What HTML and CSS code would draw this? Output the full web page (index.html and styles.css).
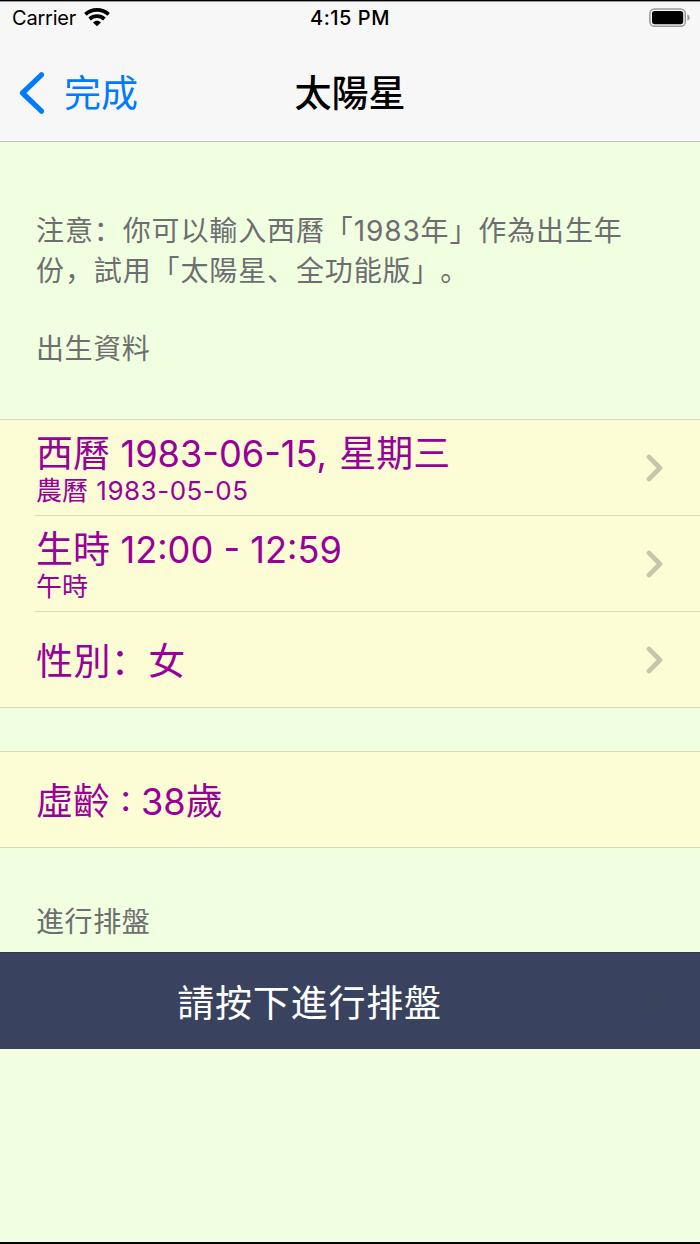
FILE: index.html
```
<!DOCTYPE html>
<html lang="zh-Hans">
<head>
  <meta charset="UTF-8" />
  <meta name="viewport" content="width=device-width, initial-scale=1.0" />
  <title>太陽星</title>
  <link rel="stylesheet" href="styles.css">
</head>
<body>
  <div class="screen">
    <header class="top">
      <div class="status">
        <div class="carrier">
          <span>Carrier</span>
          <svg class="wifi" viewBox="0 0 26 20" width="26" height="20">
            <g fill="none" stroke="#000" stroke-width="3.8">
              <path d="M1.4 7.4C8 1.4 18 1.4 24.6 7.4" />
              <path d="M5.6 12C9.9 8.2 16.1 8.2 20.4 12" />
            </g>
            <path d="M9 15.4C11.2 13.3 14.8 13.3 17 15.4L13 19.2Z" />
          </svg>
        </div>
        <span class="time">4:15 PM</span>
        <svg class="battery" viewBox="0 0 42 20" width="42" height="20">
          <rect x="0.9" y="0.9" width="35.4" height="17.4" rx="4.6" fill="none" stroke="#999" stroke-width="1.5" />
          <rect x="3" y="3" width="31.2" height="13.2" rx="2.6" />
          <path d="M38.4 6.4C41.4 7.6 41.4 11.6 38.4 12.8Z" fill="#999" />
        </svg>
      </div>
      <nav class="navbar">
        <a class="back" href="#">
          <svg viewBox="0 0 26 42" width="26" height="42">
            <path d="M23.5 2.8L4.5 21L23.5 39.2" fill="none" stroke="#007aff" stroke-width="5.2" stroke-linecap="round" stroke-linejoin="round" />
          </svg>
          <span>完成</span>
        </a>
        <h1>太陽星</h1>
      </nav>
    </header>

    <main>
      <div class="note">
        <p>注意：你可以輸入西曆「1983年」作為出生年<br>份，試用「太陽星、全功能版」。</p>
        <p class="heading">出生資料</p>
      </div>

      <ul class="group">
        <li class="row">
          <div class="text">
            <div class="title">西曆 <span class="num date">1983-06-15, </span>星期三</div>
            <div class="sub">農曆 <span class="num">1983-05-05</span></div>
          </div>
          <svg class="chevron" viewBox="0 0 18 28" width="18" height="28"><path d="M3 3L14 14L3 25" /></svg>
        </li>
        <li class="row">
          <div class="text">
            <div class="title">生時 <span class="num">12:00 - 12:59</span></div>
            <div class="sub">午時</div>
          </div>
          <svg class="chevron" viewBox="0 0 18 28" width="18" height="28"><path d="M3 3L14 14L3 25" /></svg>
        </li>
        <li class="row">
          <div class="text">
            <div class="title gender">性別：女</div>
          </div>
          <svg class="chevron" viewBox="0 0 18 28" width="18" height="28"><path d="M3 3L14 14L3 25" /></svg>
        </li>
      </ul>

      <ul class="group age">
        <li class="row">
          <div class="text">
            <div class="title">虛齡 <span class="num">: 38</span>歲</div>
          </div>
        </li>
      </ul>

      <p class="heading action">進行排盤</p>
      <button class="run">
        <span>請按下進行排盤</span>
        <svg class="chevron" viewBox="0 0 18 28" width="18" height="28"><path d="M3 3L14 14L3 25" /></svg>
      </button>
    </main>
  </div>
</body>
</html>
```

FILE: styles.css
```
* {
  box-sizing: border-box;
}

body {
  margin: 0;
  font-family: Inter, 'Noto Sans CJK SC', sans-serif;
  text-spacing-trim: space-all;
  background: #f0ffdf;
  color: #000;
}

h1, p, ul {
  margin: 0;
  padding: 0;
  font-weight: normal;
}

.screen {
  height: 1244px;
  border-top: 1px solid #000;
  border-bottom: 2px solid #000;
  overflow: hidden;
}

.top {
  height: 141px;
  background: #f7f7f7;
  border-top: 1px solid #999;
  border-bottom: 1px solid #bccbb0;
}

.status {
  display: grid;
  grid-template-columns: 1fr auto 1fr;
  align-items: center;
  height: 32px;
  padding: 0 9px 0 12px;
  font-size: 20px;
}

.carrier {
  display: flex;
  align-items: center;
  gap: 8px;
  letter-spacing: -0.2px;
}

.wifi {
  margin-top: -3px;
}

.time {
  margin-left: -3px;
  font-weight: 500;
  letter-spacing: 0.5px;
}

.battery {
  justify-self: end;
  margin-top: -1px;
}

.navbar {
  display: grid;
  grid-template-columns: 1fr auto 1fr;
  align-items: center;
  height: 106px;
  padding: 12px 18px 0;
}

.back {
  display: flex;
  align-items: center;
  gap: 20px;
  color: #007aff;
  font-size: 37px;
  line-height: 54px;
  text-decoration: none;
}

.back span,
h1 {
  padding-top: 2px;
}

h1 {
  font-size: 37px;
  line-height: 54px;
  font-weight: 500;
}

.note {
  height: 277px;
  padding: 69px 35px 0 36px;
  color: #6d6d72;
  font-size: 28px;
  line-height: 40px;
  letter-spacing: 0.88px;
  white-space: nowrap;
}

.heading {
  color: #6d6d72;
  font-size: 28px;
  line-height: 40px;
  letter-spacing: 0.6px;
}

.note .heading {
  margin-top: 38px;
}

.group {
  list-style: none;
  background: #fcfcd5;
  border-top: 1px solid #d9dabc;
  border-bottom: 1px solid #d3dabd;
}

.row {
  display: flex;
  align-items: center;
  height: 96px;
  margin-left: 35px;
  padding-right: 36px;
  border-bottom: 1px solid #dadab9;
}

.row:last-child {
  height: 95px;
  border-bottom: none;
}

.text {
  flex: 1;
  padding: 4px 0 0 1px;
  color: #909;
}

.title {
  font-size: 37px;
  line-height: 42px;
  white-space: nowrap;
}

.title .num {
  font-size: 36.2px;
}

.title .date {
  margin-right: 2px;
}

.gender {
  letter-spacing: 0.4px;
}

.sub {
  font-size: 26px;
  line-height: 32px;
}

.sub .num {
  margin-left: 1px;
  letter-spacing: 0.5px;
}

.chevron {
  fill: none;
  stroke: #c5c5ac;
  stroke-width: 4.6;
  stroke-linecap: round;
  stroke-linejoin: round;
}

.age {
  margin-top: 43px;
}

.action {
  padding: 54px 36px 10px;
}

.run {
  display: flex;
  align-items: center;
  width: 100%;
  height: 97px;
  padding: 0 36px;
  border: none;
  border-top: 1px solid #2f394e;
  background: #39425e;
  color: #fff;
  font-family: inherit;
  font-size: 37px;
  letter-spacing: 0.8px;
}

.run span {
  flex: 1;
  padding-right: 63px;
}

.run .chevron {
  stroke: #3b4358;
}
```
